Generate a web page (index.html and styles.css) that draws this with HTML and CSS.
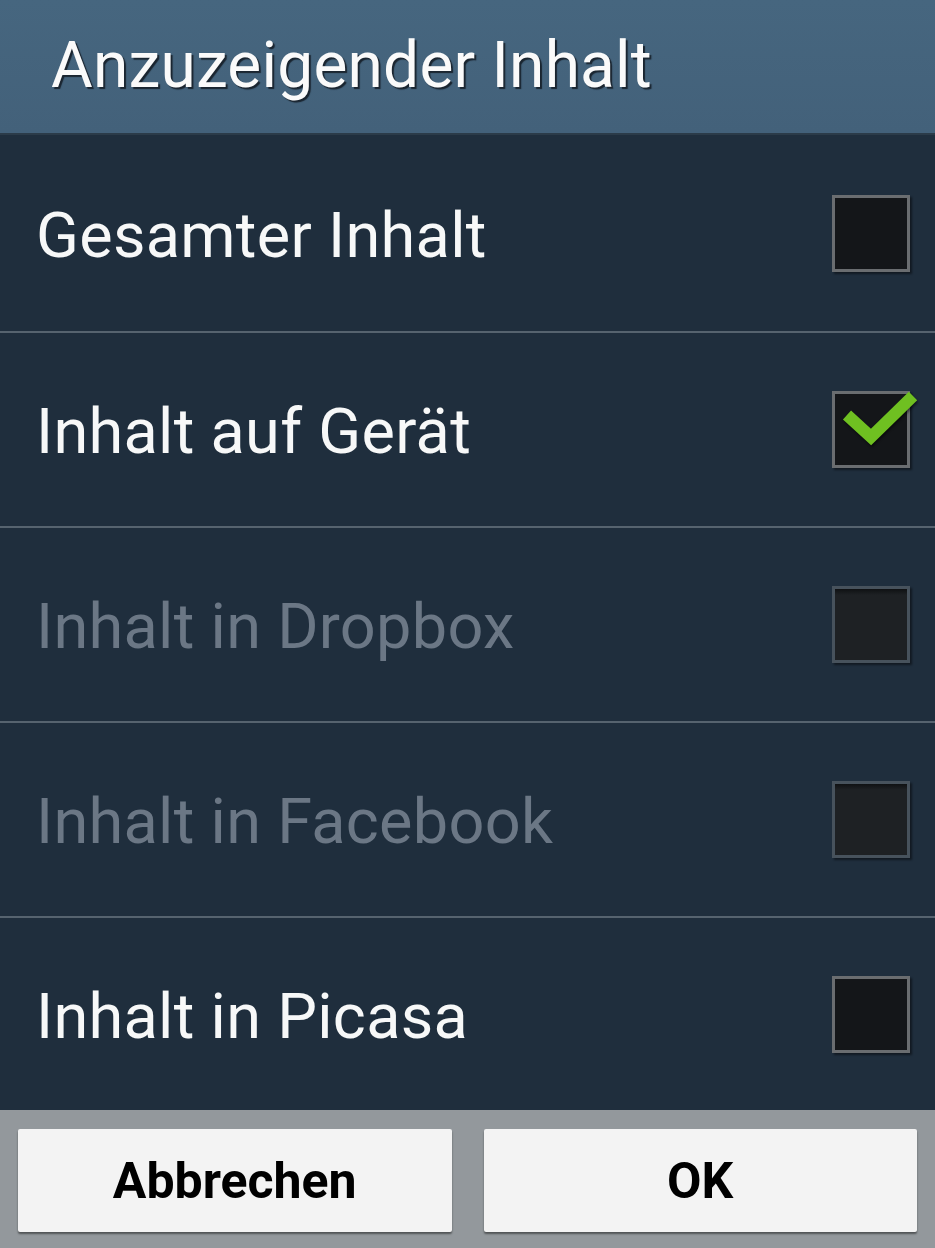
FILE: index.html
```html
<!DOCTYPE html>
<html>
<head>
<meta charset="utf-8">
<link rel="stylesheet" href="styles.css">
</head>
<body>
<div class="dialog">
  <div class="header"><h1 class="title">Anzuzeigender Inhalt</h1></div>
  <ul class="list">
    <li class="row"><span class="label">Gesamter Inhalt</span><span class="box"></span></li>
    <li class="row"><span class="label">Inhalt auf Gerät</span><span class="box">
      <svg class="check" width="80" height="60" viewBox="0 0 80 60"><path d="M10 31 L34 53 L76 12" fill="none" stroke="#6fc021" stroke-width="12"/></svg>
    </span></li>
    <li class="row disabled"><span class="label">Inhalt in Dropbox</span><span class="box"></span></li>
    <li class="row disabled"><span class="label">Inhalt in Facebook</span><span class="box"></span></li>
    <li class="row"><span class="label">Inhalt in Picasa</span><span class="box"></span></li>
  </ul>
  <div class="buttons">
    <button class="btn">Abbrechen</button>
    <button class="btn">OK</button>
  </div>
</div>
</body>
</html>
```
FILE: styles.css
```css
* { box-sizing: border-box; }
html, body { margin: 0; padding: 0; }
body { width: 935px; height: 1248px; background: #1f2e3d; font-family: Roboto, "Noto Sans", sans-serif; overflow: hidden; }
.dialog { display: flex; flex-direction: column; height: 1248px; }
.header {
  height: 135px;
  background: linear-gradient(#46667f, #43617a);
  border-bottom: 2px solid #2b3b49;
  display: flex; align-items: center;
  padding-left: 51px;
}
.title {
  margin: 0; font-weight: 400; font-size: 64px; color: #fafafa;
  text-shadow: 2px 2px 1px #1a2530;
  letter-spacing: 0.2px;
  position: relative; top: -1px;
}
.list { list-style: none; margin: 0; padding: 0; flex: 1; }
.row {
  height: 195px; display: flex; align-items: center; justify-content: space-between;
  padding: 0 25px 0 36px;
  border-bottom: 2px solid #56636f;
}
.row:first-child { height: 198px; }
.row:last-child { border-bottom: none; height: 192px; }
.label { font-size: 63px; color: #f7f8f8; letter-spacing: 0.3px; position: relative; top: 2px; }
.disabled .label { color: #6b7785; }
.box {
  width: 78px; height: 77px; border: 3px solid #6a6d70; background: #141619;
  box-shadow: 2px 2px 2px rgba(0,0,0,0.45);
  position: relative;
}
.disabled .box { border-color: #47525c; background: linear-gradient(#0f1113 0, #1e2124 6px, #1e2124); }
.check { position: absolute; left: 2px; top: -10px; overflow: visible; filter: drop-shadow(1px 2px 1px rgba(0,0,0,0.5)); }
.buttons {
  height: 138px; background: #93989c; display: flex; gap: 32px;
  padding: 19px 18px 16px 18px;
}
.btn {
  flex: 1; height: 103px; border: none; border-radius: 2px; background: #f3f3f3;
  box-shadow: 0 2px 2px rgba(0,0,0,0.45);
  font-family: Roboto, "Noto Sans", sans-serif; font-weight: 700; font-size: 50px; color: #000;
  letter-spacing: 0;
}
```
